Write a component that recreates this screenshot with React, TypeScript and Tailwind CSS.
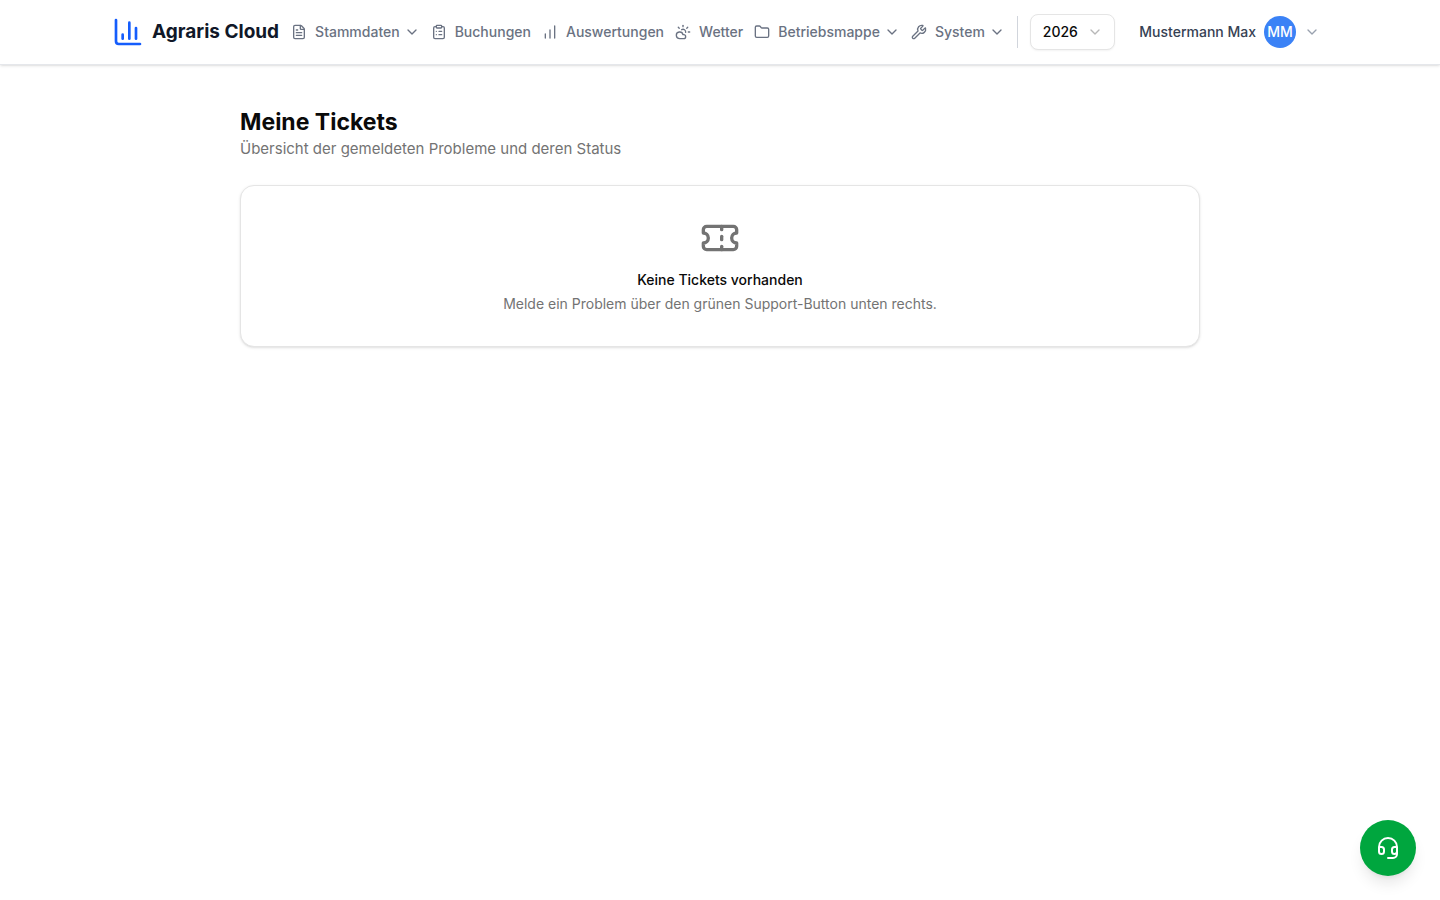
import {
  ChartColumn,
  ChartNoAxesColumnIncreasing,
  ChevronDown,
  ClipboardList,
  CloudSun,
  FileText,
  Folder,
  Ticket,
  Wrench,
  type LucideIcon,
} from 'lucide-react';

type NavEntry = { label: string; icon: LucideIcon; menu?: boolean };

const entries: NavEntry[] = [
  { label: 'Stammdaten', icon: FileText, menu: true },
  { label: 'Buchungen', icon: ClipboardList },
  { label: 'Auswertungen', icon: ChartNoAxesColumnIncreasing },
  { label: 'Wetter', icon: CloudSun },
  { label: 'Betriebsmappe', icon: Folder, menu: true },
  { label: 'System', icon: Wrench, menu: true },
];

function NavItem({ label, icon: Icon, menu }: NavEntry) {
  const style = 'flex items-center text-sm font-medium text-gray-500';
  if (menu) {
    return (
      <button type="button" className={style}>
        <Icon size={16} className="mr-2" />
        {label}
        <ChevronDown size={16} className="ml-1" />
      </button>
    );
  }
  return (
    <a href="#" className={style}>
      <Icon size={16} className="mr-2" />
      {label}
    </a>
  );
}

function HeadsetIcon() {
  return (
    <svg
      width="24"
      height="24"
      viewBox="0 0 24 24"
      fill="none"
      stroke="currentColor"
      strokeWidth="2"
      strokeLinecap="round"
      strokeLinejoin="round"
      aria-hidden="true"
    >
      <path d="M3 11h2.5a2.5 2.5 0 0 1 2.5 2.5v2a2.5 2.5 0 0 1-5 0V11a9 9 0 1 1 18 0v4.500a2.500 2.500 0 0 1-5 0v-2a2.500 2.500 0 0 1 2.500-2.500H21" />
      <path d="M21 15v3a4 4 0 0 1-4 4h-5" />
    </svg>
  );
}

function Header() {
  return (
    <header className="border-b border-gray-200 bg-white shadow-sm">
      <div className="mx-auto flex h-16 max-w-7xl items-center justify-between px-8">
        <div className="flex items-center gap-3">
          <a href="#" className="flex items-center gap-2 text-[19px] font-bold text-gray-900">
            <ChartColumn size={32} className="text-blue-600" />
            Agraris Cloud
          </a>
          <nav className="flex items-center gap-[11px]">
            {entries.map((entry) => (
              <NavItem key={entry.label} {...entry} />
            ))}
          </nav>
          <div className="h-8 border-l border-gray-300" />
          <div className="grid items-center">
            <select
              aria-label="Jahr"
              defaultValue="2026"
              className="col-start-1 row-start-1 h-9 w-[85px] appearance-none rounded-lg border border-neutral-200 bg-white pl-3 text-sm font-medium text-neutral-950 shadow-xs"
            >
              <option>2026</option>
            </select>
            <ChevronDown
              size={16}
              className="pointer-events-none col-start-1 row-start-1 mr-3 justify-self-end text-neutral-500 opacity-50"
            />
          </div>
        </div>
        <button type="button" className="flex items-center gap-2 p-2 text-sm font-medium text-gray-700">
          Mustermann Max
          <span className="flex size-8 items-center justify-center rounded-full bg-[#3b82f6] text-white">MM</span>
          <ChevronDown size={16} className="text-gray-400" />
        </button>
      </div>
    </header>
  );
}

export default function App() {
  return (
    <div className="min-h-screen bg-white font-['Inter',sans-serif] text-neutral-950">
      <Header />
      <main className="mx-auto max-w-5xl px-8 pt-[42px]">
        <h1 className="text-[23px] leading-[30px] font-bold">Meine Tickets</h1>
        <p className="text-[15px] leading-6 text-neutral-500">Übersicht der gemeldeten Probleme und deren Status</p>
        <section className="mt-6 flex flex-col items-center rounded-[14px] border border-neutral-200 bg-white p-8 text-sm shadow-sm">
          <Ticket size={40} className="mb-3 text-neutral-500" />
          <h2 className="font-medium">Keine Tickets vorhanden</h2>
          <p className="mt-1 text-neutral-500">Melde ein Problem über den grünen Support-Button unten rechts.</p>
        </section>
      </main>
      <button
        type="button"
        aria-label="Support"
        className="fixed right-6 bottom-6 flex size-14 items-center justify-center rounded-full bg-green-600 text-white shadow-lg"
      >
        <HeadsetIcon />
      </button>
    </div>
  );
}
